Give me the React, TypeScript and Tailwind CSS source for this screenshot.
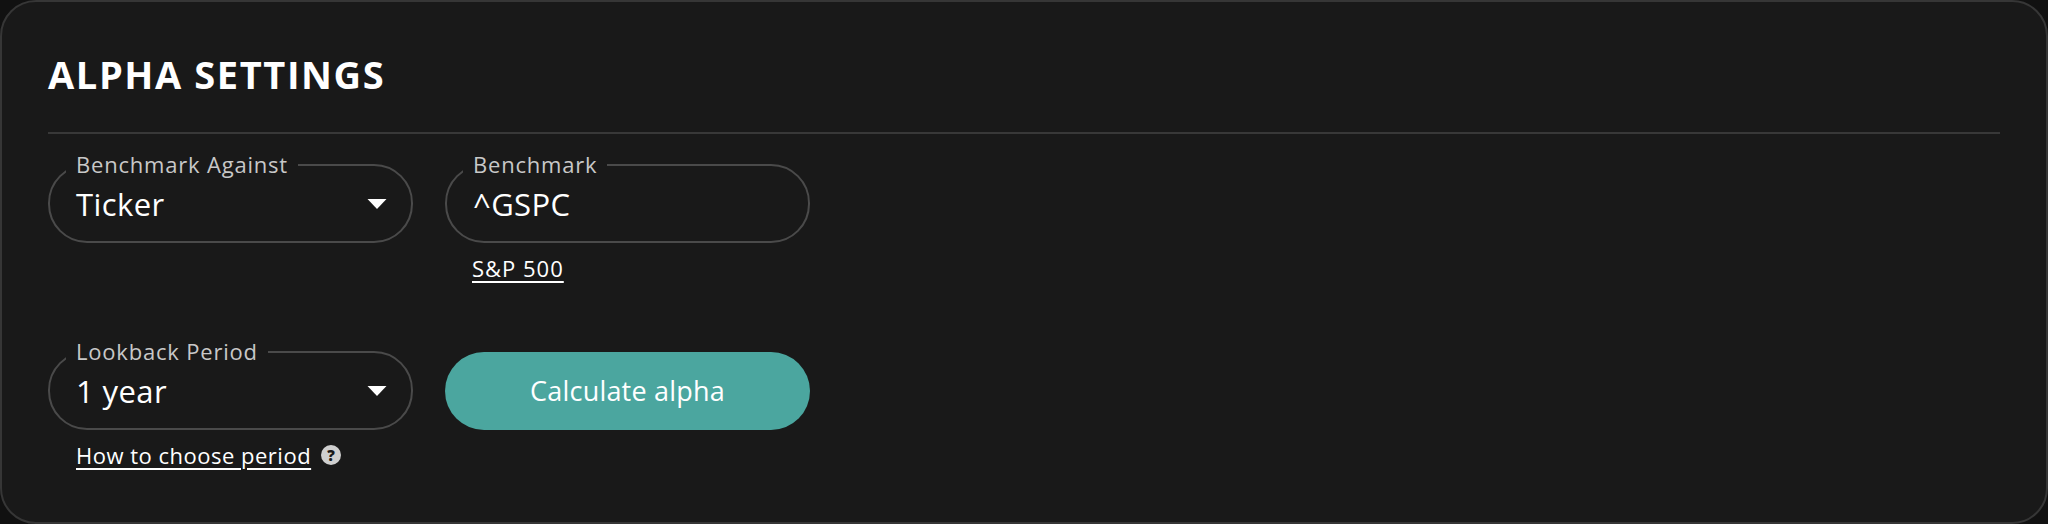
const font = "font-['Open_Sans','Noto_Sans',sans-serif]"

function Caret() {
  return (
    <svg width="20" height="12" viewBox="0 0 20 12" className="shrink-0">
      <path d="M0.5 1 H19.5 L10 11 Z" fill="#fff" />
    </svg>
  )
}

function Field({ label, value, select }: { label: string; value: string; select?: boolean }) {
  return (
    <fieldset className="w-[365px] h-[92px] rounded-[39px] border-2 border-[#4a4a4a] flex items-center">
      <legend className="ml-[16px] px-[10px] pb-[2px] text-[22px] leading-[26px] tracking-[0.8px] text-[#c8c8c8]">{label}</legend>
      <div className="flex items-center justify-between w-full h-[60px] pl-[26px] pr-[24px] pb-[13px]">
        <span className="text-[31px] leading-[38px] tracking-[0.4px] text-white">{value}</span>
        {select && <Caret />}
      </div>
    </fieldset>
  )
}

export default function App() {
  return (
    <div className={`${font} w-[2048px] h-[524px] bg-[#111111]`}>
      <div className="h-full rounded-[36px] border-2 border-[#363636] bg-[#191919] px-[46px] pt-[44px]">
        <h2 className="text-[38px] leading-[56px] font-bold tracking-[1.6px] text-white pb-[30px] border-b-2 border-[#383838]">
          ALPHA SETTINGS
        </h2>
        <div className="grid grid-cols-[365px_365px] gap-x-[32px] mt-[17px]">
          <Field label="Benchmark Against" value="Ticker" select />
          <div>
            <Field label="Benchmark" value="^GSPC" />
            <a className="block mt-[11px] ml-[27px] text-[22px] leading-[28px] tracking-[1px] text-white underline underline-offset-4">
              S&amp;P 500
            </a>
          </div>
          <div className="mt-[56px]">
            <Field label="Lookback Period" value="1 year" select />
            <div className="flex items-center gap-[10px] mt-[11px] ml-[28px]">
              <a className="text-[22px] leading-[28px] tracking-[0.5px] text-white underline underline-offset-4">How to choose period</a>
              <span className="w-[20px] h-[20px] rounded-full bg-[#cfcfcf] text-[#191919] text-[15px] leading-[20px] font-extrabold text-center">
                ?
              </span>
            </div>
          </div>
          <div className="mt-[70px]">
            <button className="w-[365px] h-[78px] rounded-[39px] bg-[#4ba69f] text-white text-[27px] tracking-[0.2px] font-medium">
              Calculate alpha
            </button>
          </div>
        </div>
      </div>
    </div>
  )
}
